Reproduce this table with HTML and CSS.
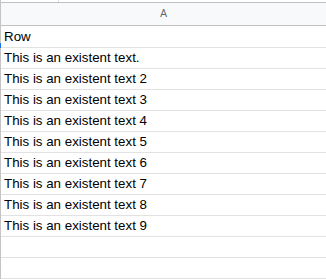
FILE: index.html
```html
<!DOCTYPE html>
<html lang="en">
<head>
  <meta charset="UTF-8">
  <title>Sheet - Column A</title>
  <link rel="stylesheet" href="styles.css">
</head>
<body>
  <div class="sheet">
    <!-- bit of the toolbar row above the grid -->
    <div class="top-strip">
      <div class="top-cell"></div>
    </div>

    <div class="col-header">A</div>

    <div class="rows">
      <div class="cell first">Row<span class="sel-mark"></span></div>
      <div class="cell">This is an existent text.</div>
      <div class="cell">This is an existent text 2</div>
      <div class="cell">This is an existent text 3</div>
      <div class="cell">This is an existent text 4</div>
      <div class="cell">This is an existent text 5</div>
      <div class="cell">This is an existent text 6</div>
      <div class="cell">This is an existent text 7</div>
      <div class="cell">This is an existent text 8</div>
      <div class="cell">This is an existent text 9</div>
      <div class="cell"></div>
      <div class="cell"></div>
    </div>
  </div>
</body>
</html>
```

FILE: styles.css
```css
body {
  margin: 0;
  background: #ffffff;
  font-family: "Liberation Sans", Arial, sans-serif;
  overflow: hidden;
}
.sheet {
  width: 326px;
  height: 279px;
  border-left: 1px solid #c4c4c4;
  box-sizing: border-box;
}
.top-strip {
  height: 2px;
  display: flex;
}
.top-cell {
  width: 57px;
  border-right: 1px solid #e0e0e0;
}
.col-header {
  height: 22px;
  line-height: 22px;
  border-top: 1px solid #c0c0c0;
  border-bottom: 1px solid #c0c0c0;
  background: #f8f9fa;
  color: #5f6368;
  font-family: Roboto, "Liberation Sans", sans-serif;
  font-size: 11px;
  text-align: center;
}
.cell {
  height: 20px;
  line-height: 20px;
  padding-left: 3px;
  border-bottom: 1px solid #e2e2e2;
  font-size: 13.33px;
  color: #000000;
  white-space: nowrap;
}
.cell.first {
  height: 21px;
  line-height: 22px;
  position: relative;
}
/* edge of the active-cell outline peeking in on the left */
.sel-mark {
  position: absolute;
  left: -1px;
  bottom: -1px;
  width: 1px;
  height: 5px;
  background: #1a73e8;
}
```
